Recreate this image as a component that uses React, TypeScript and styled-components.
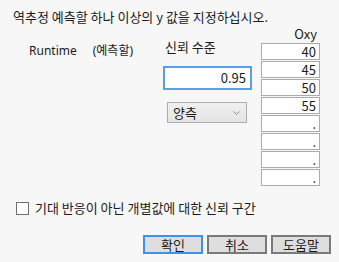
import styled, { createGlobalStyle } from 'styled-components';

const GlobalStyle = createGlobalStyle`
    html, body {
        margin: 0;
        padding: 0;
        background: #f7f7f7;
    }
    body {
        font-family: 'Noto Sans CJK KR', 'Noto Sans', sans-serif;
        font-size: 13px;
        color: #1a1a1a;
    }
`;

const Dialog = styled.div`
    width: 339px;
    height: 262px;
    box-sizing: border-box;
    background: #f7f7f7;
    display: flex;
    flex-direction: column;
`;

const Title = styled.div`
    margin: 9px 0 0 13px;
    line-height: 16px;
`;

const Main = styled.div`
    display: flex;
    margin-top: 1px;
`;

const LeftPane = styled.div`
    width: 134px;
    padding-left: 29px;
    padding-top: 17px;
    display: flex;
    gap: 16px;
    font-family: 'Noto Sans', 'Noto Sans CJK KR', sans-serif;
    font-size: 12px;
    line-height: 16px;
`;

const MiddlePane = styled.div`
    width: 89px;
    display: flex;
    flex-direction: column;
`;

const Label = styled.div`
    margin: 13px 0 0 2px;
    line-height: 16px;
`;

const NumberInput = styled.div`
    margin-top: 11px;
    height: 24px;
    box-sizing: border-box;
    border: 2px solid #5b9ee6;
    background: #fff;
    text-align: right;
    padding-right: 4px;
    line-height: 20px;
`;

const Select = styled.div`
    margin: 12px 0 0 4px;
    width: 80px;
    height: 21px;
    box-sizing: border-box;
    border: 1px solid #adadad;
    background: linear-gradient(#f0f0f0, #e4e4e4);
    display: flex;
    align-items: center;
    justify-content: space-between;
    padding: 0 6px 0 5px;
    line-height: 18px;
`;

const RightPane = styled.div`
    margin-left: 9px;
    width: 59px;
    display: flex;
    flex-direction: column;
    gap: 1px;
`;

const ColumnHeader = styled.div`
    text-align: right;
    padding-right: 3px;
    line-height: 16px;
    height: 16px;
`;

const Cell = styled.div`
    height: 17px;
    box-sizing: border-box;
    border: 1px solid #ababab;
    background: #fff;
    text-align: right;
    padding-right: 3px;
    line-height: 15px;
`;

const CheckRow = styled.label`
    display: flex;
    align-items: center;
    gap: 6px;
    margin: 14px 0 0 16px;
    line-height: 16px;
`;

const Box = styled.span`
    width: 13px;
    height: 13px;
    box-sizing: border-box;
    border: 1px solid #707070;
    background: #fff;
`;

const ButtonBar = styled.div`
    display: flex;
    justify-content: flex-end;
    gap: 4px;
    margin: 19px 8px 0 0;
`;

const Button = styled.div<{ $primary?: boolean }>`
    width: 60px;
    height: 19px;
    box-sizing: border-box;
    border: 2px solid ${({ $primary }) => ($primary ? '#3d92ea' : '#7a7a7a')};
    background: #dedede;
    text-align: center;
    line-height: 15px;
`;

const values = ['40', '45', '50', '55', '.', '.', '.', '.'];

const App = () => (
    <Dialog>
        <GlobalStyle />
        <Title>역추정 예측할 하나 이상의 y 값을 지정하십시오.</Title>
        <Main>
            <LeftPane>
                <span>Runtime</span>
                <span>(예측할)</span>
            </LeftPane>
            <MiddlePane>
                <Label>신뢰 수준</Label>
                <NumberInput>0.95</NumberInput>
                <Select>
                    <span>양측</span>
                    <svg width="7" height="4" viewBox="0 0 7 4">
                        <path d="M0.5 0.5 L3.5 3.3 L6.5 0.5" fill="none" stroke="#888" strokeWidth="1" />
                    </svg>
                </Select>
            </MiddlePane>
            <RightPane>
                <ColumnHeader>Oxy</ColumnHeader>
                {values.map((v, i) => (
                    <Cell key={i}>{v}</Cell>
                ))}
            </RightPane>
        </Main>
        <CheckRow>
            <Box />
            <span>기대 반응이 아닌 개별값에 대한 신뢰 구간</span>
        </CheckRow>
        <ButtonBar>
            <Button $primary>확인</Button>
            <Button>취소</Button>
            <Button>도움말</Button>
        </ButtonBar>
    </Dialog>
);

export default App;
